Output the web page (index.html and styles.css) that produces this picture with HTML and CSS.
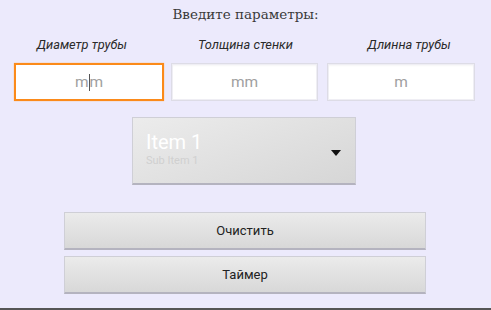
FILE: index.html
```html
<!DOCTYPE html>
<html>
<head>
<meta charset="utf-8">
<link rel="stylesheet" href="styles.css">
</head>
<body>
<div class="screen">
  <div class="title">Введите параметры:</div>
  <div class="labels">
    <div class="label">Диаметр трубы</div>
    <div class="label">Толщина стенки</div>
    <div class="label">Длинна трубы</div>
  </div>
  <div class="fields">
    <div class="field f1 focused"><span class="ph">m<span class="cursor"></span>m</span></div>
    <div class="field f2"><span class="ph">mm</span></div>
    <div class="field f3"><span class="ph">m</span></div>
  </div>
  <div class="spinner-row">
    <div class="spinner">
      <div class="sp-text">
        <div class="sp-main">Item 1</div>
        <div class="sp-sub">Sub Item 1</div>
      </div>
      <svg class="arrow" width="10" height="6" viewBox="0 0 10 6"><path d="M0 0 H10 L5 6 Z" fill="#111"/></svg>
    </div>
  </div>
  <div class="buttons">
    <div class="btn">Очистить</div>
    <div class="btn">Таймер</div>
  </div>
  <div class="bottom-line"></div>
</div>
</body>
</html>
```

FILE: styles.css
```css
html, body {
  margin: 0;
  padding: 0;
}
body {
  background: #eceafc;
  width: 491px;
  height: 310px;
  overflow: hidden;
  font-family: Roboto, "Liberation Sans", sans-serif;
}
.screen {
  width: 491px;
  height: 310px;
  display: flex;
  flex-direction: column;
}
.title {
  font-family: "DejaVu Serif", serif;
  font-size: 13.5px;
  color: #3a3a3a;
  text-align: center;
  height: 22px;
  padding-top: 5px;
  line-height: 18px;
}
.labels {
  display: grid;
  grid-template-columns: 1fr 1fr 1fr;
  height: 36px;
  line-height: 36px;
}
.label {
  font-style: italic;
  font-size: 12.8px;
  color: #2a2a2a;
  text-align: center;
}
.fields {
  display: flex;
  padding-left: 14px;
  height: 38px;
}
.field {
  box-sizing: border-box;
  height: 38px;
  background: #ffffff;
  border: 1px solid #dddce6;
  display: flex;
  align-items: center;
  justify-content: center;
  box-shadow: inset 0 0 0 1px #efeef4, inset 0 2px 2px rgba(0,0,0,0.04);
}
.f1 { width: 150px; }
.f2 { width: 147px; margin-left: 7px; }
.f3 { width: 148px; margin-left: 9px; }
.focused {
  border: 2px solid #fb8a1a;
  box-shadow: 0 0 1px #ffb060;
}
.ph {
  font-size: 15.5px;
  color: #a0a0a0;
}
.cursor {
  display: inline-block;
  width: 1px;
  height: 17px;
  background: #555;
  vertical-align: -4px;
}
.spinner-row {
  padding-top: 16px;
  padding-left: 132px;
  height: 68px;
}
.spinner {
  box-sizing: border-box;
  width: 224px;
  height: 68px;
  background: linear-gradient(160deg, #ececec 0%, #d6d6d6 100%);
  border: 1px solid #cfcfd6;
  border-bottom: 2px solid #b4b3bf;
  display: flex;
  align-items: center;
  padding-left: 13px;
  padding-right: 14px;
}
.sp-text {
  flex: 1;
  margin-top: -4px;
}
.sp-main {
  color: #ffffff;
  font-size: 20px;
  line-height: 24px;
}
.sp-sub {
  color: #d0d0d0;
  font-size: 11px;
  line-height: 13px;
}
.arrow {
  margin-top: 4px;
}
.buttons {
  padding-top: 27px;
  padding-left: 64px;
  display: flex;
  flex-direction: column;
  gap: 6px;
}
.btn {
  box-sizing: border-box;
  width: 362px;
  height: 38px;
  background: linear-gradient(180deg, #ebebeb 0%, #d8d8d8 100%);
  border: 1px solid #cfcfd6;
  border-bottom: 2px solid #b4b3bf;
  text-align: center;
  line-height: 36px;
  font-size: 13px;
  color: #222;
}
.bottom-line {
  margin-top: auto;
  height: 2px;
  background: #555;
}
```
